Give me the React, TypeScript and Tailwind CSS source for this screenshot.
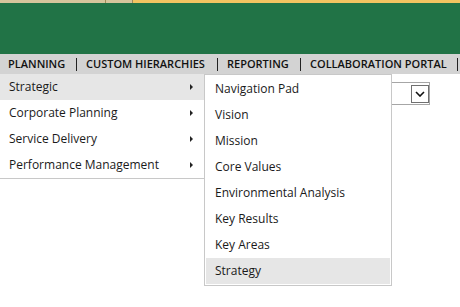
import React from "react";

const font = { fontFamily: '"Open Sans", "Noto Sans", sans-serif' };

function Arrow() {
  return (
    <svg width="4" height="6" viewBox="0 0 4 6" className="block">
      <path d="M0 0 L3 3 L0 6 Z" fill="#222" />
    </svg>
  );
}

const mainItems = ["Strategic", "Corporate Planning", "Service Delivery", "Performance Management"];
const subItems = [
  "Navigation Pad",
  "Vision",
  "Mission",
  "Core Values",
  "Environmental Analysis",
  "Key Results",
  "Key Areas",
  "Strategy",
];

export default function App() {
  return (
    <div className="w-[460px] h-[307px] bg-white overflow-hidden relative" style={font}>
      {/* top strip */}
      <div className="flex h-[3px]">
        <div className="w-[105px] bg-[#d6c59c]" />
        <div className="w-px bg-[#a08a58]" />
        <div className="w-[26px] bg-[#d6c59c]" />
        <div className="w-px bg-[#a08a58]" />
        <div className="flex-1 bg-[#f3c461]" />
      </div>
      {/* green header */}
      <div className="h-[51px] bg-[#217346]" />
      {/* nav bar */}
      <div className="h-[20px] bg-[#d3d3d3] flex items-center text-[11px] font-semibold text-[#111] whitespace-nowrap">
        <div className="w-[76px] shrink-0 pl-[8px]">PLANNING</div>
        <div className="w-px h-[13px] bg-[#222] shrink-0" />
        <div className="w-[140px] shrink-0 pl-[9px]">CUSTOM HIERARCHIES</div>
        <div className="w-px h-[13px] bg-[#222] shrink-0" />
        <div className="w-[82px] shrink-0 pl-[9px]">REPORTING</div>
        <div className="w-px h-[13px] bg-[#222] shrink-0" />
        <div className="w-[156px] shrink-0 pl-[9px]">COLLABORATION PORTAL</div>
        <div className="w-px h-[13px] bg-[#222] shrink-0" />
      </div>
      {/* content */}
      <div className="relative">
        <div className="flex justify-end pt-[8px] pr-[30px]">
          <div className="relative w-[140px] h-[23px] border border-[#a6a6a6] bg-white">
            <div className="absolute right-[0px] top-[2px] w-[18px] h-[18px] border border-[#707070] bg-white flex items-center justify-center">
              <svg width="10" height="6" viewBox="0 0 10 6">
                <path d="M1 1 L5 5 L9 1" fill="none" stroke="#111" strokeWidth="1.6" />
              </svg>
            </div>
          </div>
        </div>

        {/* main dropdown */}
        <div className="absolute left-0 top-0 w-[205px] bg-white border-r border-b border-[#c8c8c8] text-[12px] text-[#1a1a1a]">
          {mainItems.map((m, i) => (
            <div
              key={m}
              className={`h-[26px] flex items-center justify-between pl-[9px] pr-[10px] ${i === 0 ? "bg-[#e6e6e6]" : ""}`}
            >
              <span>{m}</span>
              <Arrow />
            </div>
          ))}
        </div>

        {/* sub dropdown */}
        <div className="absolute left-[204px] top-0 w-[188px] bg-white border border-[#c8c8c8] p-px text-[12px] text-[#1a1a1a]">
          {subItems.map((s, i) => (
            <div
              key={s}
              className={`h-[26px] flex items-center pl-[9px] ${i === subItems.length - 1 ? "bg-[#e6e6e6]" : ""}`}
            >
              {s}
            </div>
          ))}
        </div>
      </div>
    </div>
  );
}
